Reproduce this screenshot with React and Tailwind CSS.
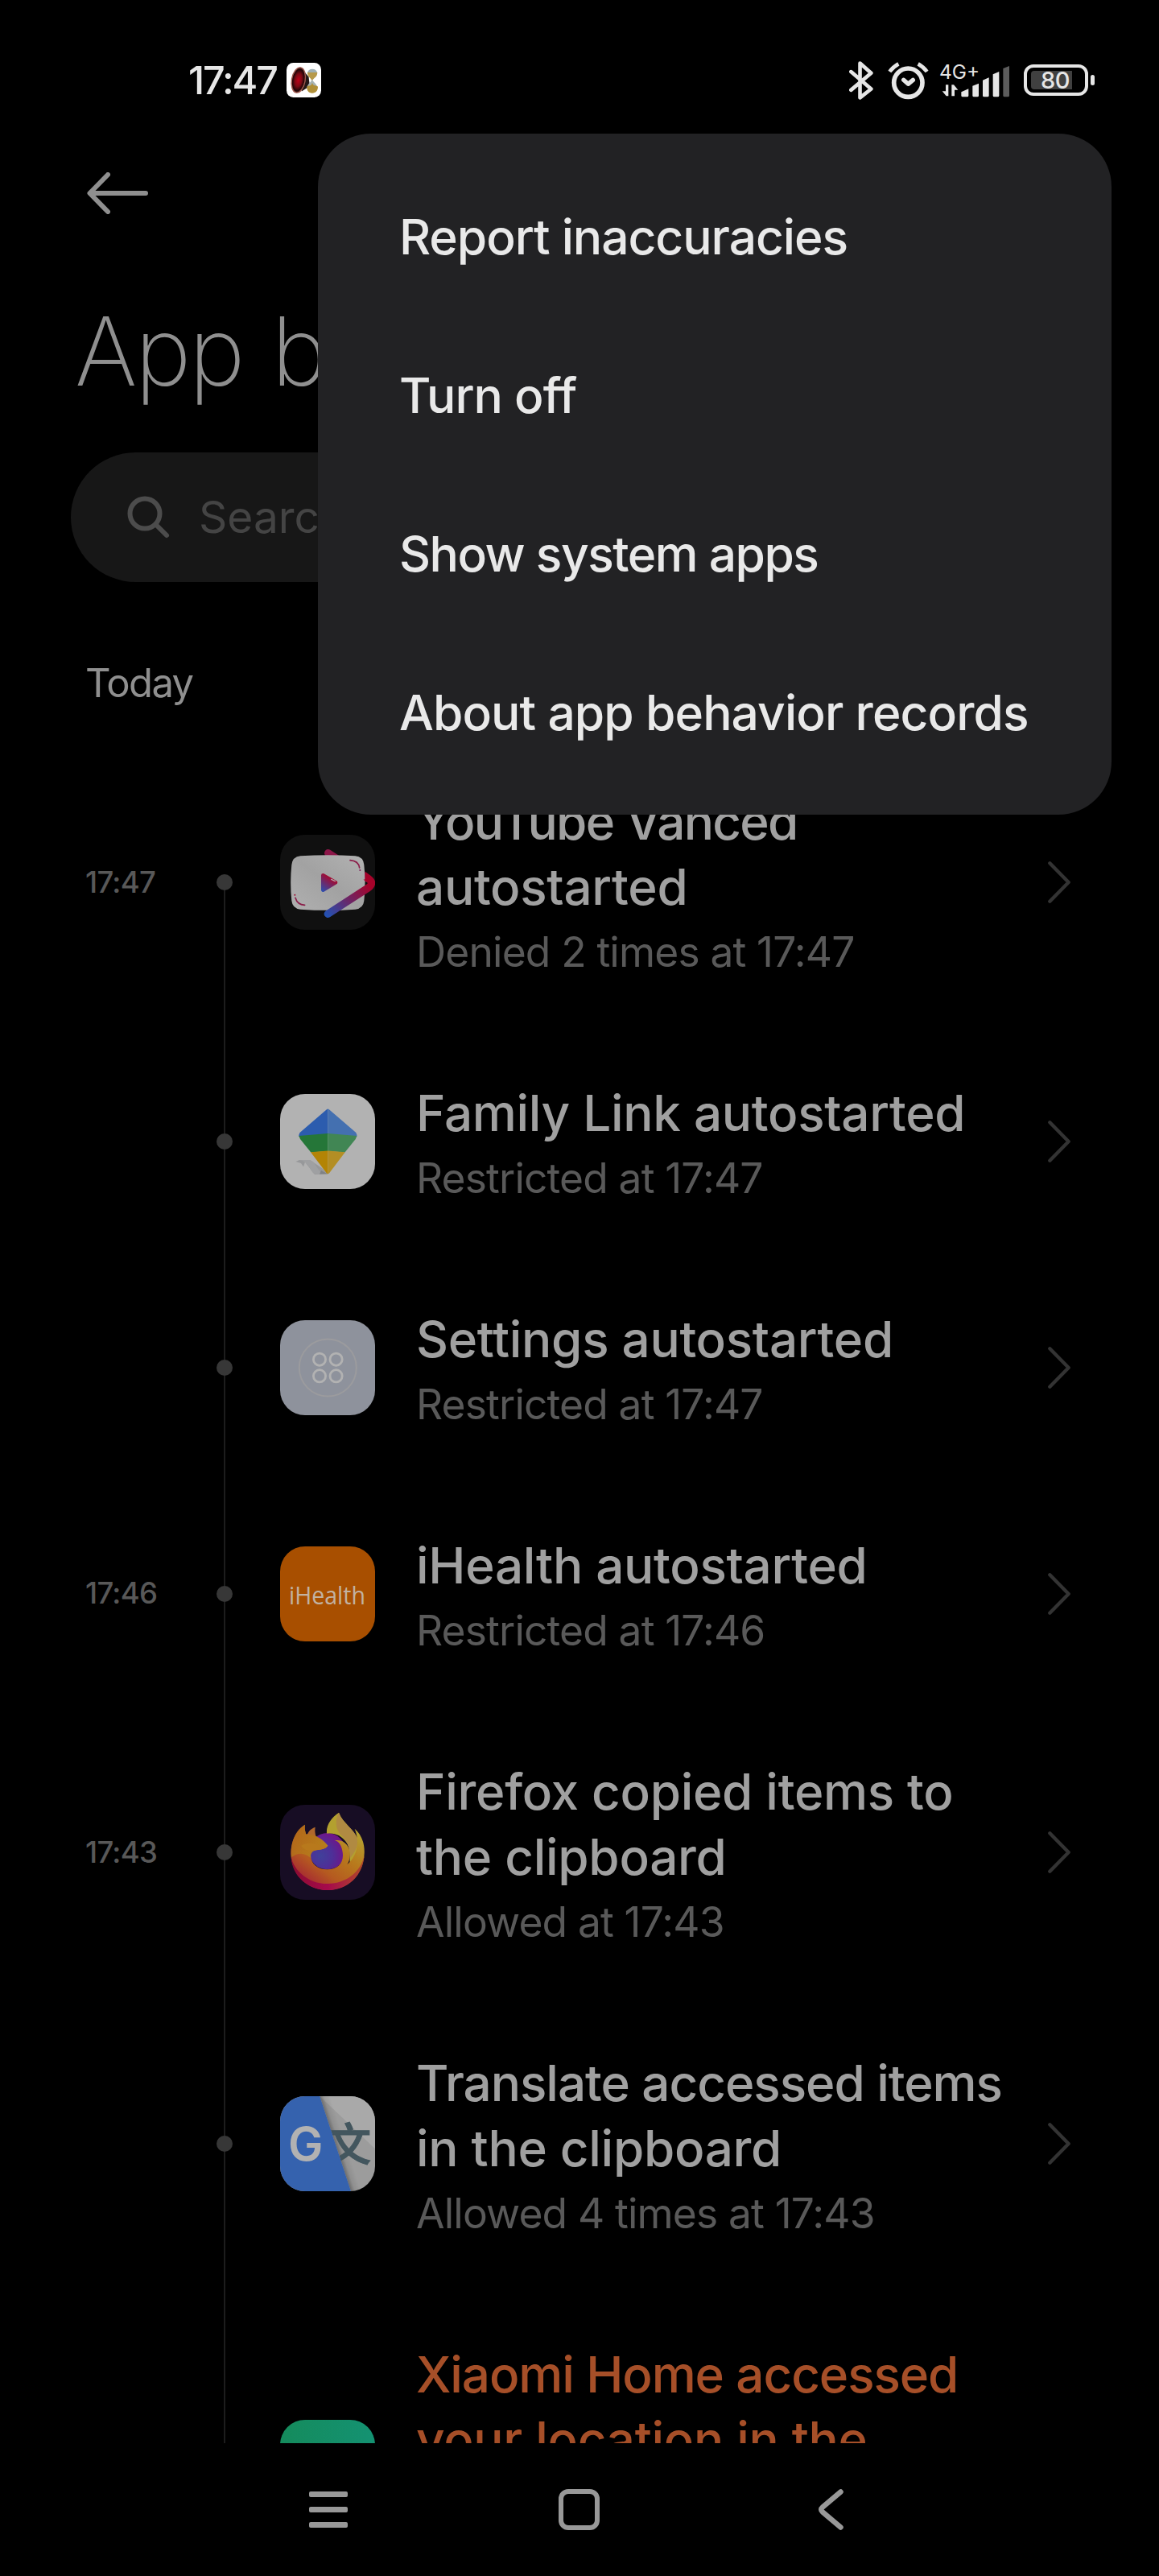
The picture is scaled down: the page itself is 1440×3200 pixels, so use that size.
const MENU_ITEMS = [
  { label: 'Report inaccuracies', tracking: 'tracking-[-1.05px]' },
  { label: 'Turn off', tracking: 'tracking-[-1px]' },
  { label: 'Show system apps', tracking: 'tracking-[-1.5px]' },
  { label: 'About app behavior records', tracking: 'tracking-[-0.92px]' },
];

/* ---------- status bar ---------- */

function NotificationIcon() {
  return (
    <svg className="h-[43px] w-[43px]" viewBox="470 86 128 128">
      <defs>
        <radialGradient id="speaker" cx="0.5" cy="0.5" r="0.5">
          <stop offset="0" stopColor="#c00018" />
          <stop offset="0.5" stopColor="#7c0a14" />
          <stop offset="0.85" stopColor="#200507" />
          <stop offset="1" stopColor="#5a2a24" />
        </radialGradient>
      </defs>
      <rect x="470" y="86" width="128" height="128" rx="25" fill="#fff" />
      <path d="M528 110 L552 138 L556 172 L526 192Z" fill="#221716" />
      <ellipse cx="514" cy="150" rx="25" ry="47" transform="rotate(10 514 150)" fill="url(#speaker)" stroke="#a05a50" strokeWidth="4" />
      <path d="M547 124 A19 19 0 0 1 584 124Z" fill="#9fb0b4" />
      <path d="M547 122 H584 C584 140 570 142 567 150 H562 C560 142 547 138 547 122Z" fill="#b79a4a" />
      <path d="M562 150 H567 C570 160 584 164 584 180 H546 C546 164 560 160 562 150Z" fill="#a8b4b4" />
      <path d="M545 174 C555 168 560 176 565 160 C570 176 578 168 586 174 C586 190 578 198 565 198 C552 198 545 190 545 174Z" fill="#b09038" />
    </svg>
  );
}

function BluetoothIcon() {
  return (
    <svg className="h-[48px] w-[30px]" viewBox="75 75 91 144" fill="none" stroke="#e6e6e6" strokeWidth="14" strokeLinecap="round" strokeLinejoin="round">
      <path d="M82 114 L158 179 L116 212 V82 L158 119 L82 183" />
    </svg>
  );
}

function AlarmIcon() {
  return (
    <svg className="h-[48px] w-[51px]" viewBox="219 75 153 144" fill="none" stroke="#e6e6e6">
      <circle cx="295" cy="155" r="53" strokeWidth="17" />
      <path d="M278 145 L295 160 L313 145" strokeWidth="16" strokeLinecap="round" strokeLinejoin="round" />
      <path d="M226 114 Q239 96 259 85 M332 85 Q352 96 365 114" strokeWidth="14" />
    </svg>
  );
}

function SignalIcon() {
  return (
    <svg className="h-[48px] w-[86px] overflow-visible" viewBox="413 75 258 144" fill="#e6e6e6">
      <text x="410" y="140" fontFamily="Inter, sans-serif" fontSize="73" fontWeight="430" textLength="150" lengthAdjust="spacingAndGlyphs">4G+</text>
      <path d="M434 163 H444 V205 H436 L421 187 H434Z M456 163 H464 L480 182 H467 V205 H456Z" />
      <path d="M492 190 L519 178 V203 Q519 208 514 208 H497 Q492 208 492 203Z" />
      <path d="M534 167 L557 158 V203 Q557 208 552 208 H539 Q534 208 534 203Z" />
      <path d="M572 146 L595 136 V203 Q595 208 590 208 H577 Q572 208 572 203Z" />
      <path d="M610 124 L633 114 V203 Q633 208 628 208 H615 Q610 208 610 203Z" />
      <path d="M648 102 L671 93 V203 Q671 208 666 208 H653 Q648 208 648 203Z" fill="#5c5c5c" />
    </svg>
  );
}

function Battery() {
  return (
    <div className="flex items-center gap-[3px]">
      <div className="flex h-[39px] w-[80px] items-center rounded-[12px] border-4 border-[#e6e6e6] pl-[5px]">
        <div className="flex h-[23px] w-[51px] items-center justify-center rounded-l-[4px] bg-[#404040] pl-[9px] text-[29px] leading-none font-medium tracking-[-0.5px] text-[#e6e6e6]">
          80
        </div>
      </div>
      <div className="h-[13px] w-[5px] rounded-full bg-[#e6e6e6]" />
    </div>
  );
}

function StatusBar() {
  return (
    <div className="flex h-[199px] items-center justify-between pr-[80px] pl-[234px]">
      <div className="flex items-center gap-[12px]">
        <span className="pt-[2px] text-[48.5px] leading-none font-medium tracking-[-2.1px] text-[#e6e6e6]">17:47</span>
        <NotificationIcon />
      </div>
      <div className="flex items-center">
        <BluetoothIcon />
        <div className="ml-[18px]"><AlarmIcon /></div>
        <div className="ml-[14px]"><SignalIcon /></div>
        <div className="ml-[18px]"><Battery /></div>
      </div>
    </div>
  );
}

/* ---------- app icons ---------- */

const ICON = 'block h-[118px] w-[118px] rounded-[31px]';

function VancedIcon() {
  return (
    <svg className={ICON} viewBox="24 24 354 354">
      <defs>
        <linearGradient id="ribbon" gradientUnits="userSpaceOnUse" x1="330" y1="190" x2="200" y2="325">
          <stop offset="0" stopColor="#a5032a" />
          <stop offset="0.5" stopColor="#6a2768" />
          <stop offset="1" stopColor="#2450b2" />
        </linearGradient>
        <linearGradient id="play" gradientUnits="userSpaceOnUse" x1="215" y1="185" x2="180" y2="235">
          <stop offset="0" stopColor="#a30a30" />
          <stop offset="1" stopColor="#2c4eb0" />
        </linearGradient>
        <linearGradient id="plate" x1="0" y1="1" x2="1" y2="0">
          <stop offset="0" stopColor="#b0b0b0" />
          <stop offset="0.5" stopColor="#a2a2a2" />
          <stop offset="1" stopColor="#b2b2b2" />
        </linearGradient>
        <clipPath id="ribbonClip"><path d="M341 100 H400 V400 H150 V240 L341 190Z" /></clipPath>
      </defs>
      <rect x="24" y="24" width="354" height="354" fill="#101010" />
      <path d="M203 92 L350 187" fill="none" stroke="#8c1648" strokeWidth="28" strokeLinecap="round" />
      <path d="M100 103 Q202 96 304 103 Q334 106 337 136 Q344 202 337 270 Q334 299 304 302 Q202 309 100 302 Q70 299 67 270 Q60 202 67 136 Q70 106 100 103Z" fill="url(#plate)" />
      <path d="M330 170 L354 188 Q376 204 352 222 L202 319" fill="none" stroke="url(#ribbon)" strokeWidth="28" strokeLinecap="round" strokeLinejoin="round" clipPath="url(#ribbonClip)" />
      <path d="M184 175 L231 202 L184 230Z" fill="url(#play)" stroke="url(#play)" strokeWidth="14" strokeLinejoin="round" />
      <path d="M215 190 L229 197" stroke="#b5a0a8" strokeWidth="4" strokeLinecap="round" />
      <path d="M285 119 Q316 121 320 147" fill="none" stroke="#8a1c48" strokeWidth="5" strokeLinecap="round" />
      <path d="M81 259 Q88 285 116 286" fill="none" stroke="#8a1c48" strokeWidth="5" strokeLinecap="round" />
      <circle cx="322" cy="156" r="3" fill="#7a2058" />
      <circle cx="79" cy="248" r="3" fill="#a00830" />
    </svg>
  );
}

function FamilyLinkIcon() {
  return (
    <svg className={ICON} viewBox="0 0 118 118">
      <rect width="118" height="118" fill="#b2b2b2" />
      <path d="M19.5 84 L24 82 H37 L52 92 L59.5 99 L43 100 L31 84.500 L29 90.500 L26 86Z" fill="#97989a" />
      <path d="M24 82 H37 Q42 83 45 90 L52 99.500 H43 Q40 98 37 92Q32 83 24 82Z" fill="#9fa0a2" />
      <path d="M51 95 L59.400 99.500 H49Z" fill="#808284" />
      <path d="M57 20 Q58.200 18.500 59.400 18.500 V50 L23.500 53 Q23 50.500 24.500 48Z" fill="#2c5cae" />
      <path d="M59.400 18.500 Q60.600 18.500 61.800 20 L94.300 48 Q95.800 50.500 95.300 53 L59.400 50Z" fill="#4470b0" />
      <path d="M59.400 49 L23.400 52 L25 56 L38.300 72.500 L59.400 71Z" fill="#257638" />
      <path d="M59.400 49 L95.400 52 L93.800 56 L80.500 72.500 L59.400 71Z" fill="#418654" />
      <path d="M59.400 70.500 L38 72.300 L57.500 98 Q58.500 99.300 59.400 99.300Z" fill="#b38405" />
      <path d="M59.400 70.500 L80.800 72.300 L61.300 98 Q60.300 99.300 59.400 99.300Z" fill="#b38e24" />
    </svg>
  );
}

function SettingsIcon() {
  return (
    <svg className={ICON} viewBox="0 0 118 118" fill="none">
      <rect width="118" height="118" fill="#8e929c" />
      <circle cx="59.300" cy="59" r="35.500" stroke="#9b9b9e" strokeWidth="2" />
      <g stroke="#b2b2b2" strokeWidth="2.800">
        <circle cx="49" cy="48.700" r="7.600" />
        <circle cx="69.600" cy="48.700" r="7.600" />
        <circle cx="49" cy="69.300" r="7.600" />
        <circle cx="69.600" cy="69.300" r="7.600" />
      </g>
    </svg>
  );
}

function IHealthIcon() {
  return (
    <svg className={ICON} viewBox="0 0 118 118">
      <rect width="118" height="118" fill="#a84f00" />
      <text x="11" y="71.500" fontFamily="'Open Sans', sans-serif" fontSize="31" fill="#c2b2a2" textLength="95" lengthAdjust="spacingAndGlyphs">iHealth</text>
    </svg>
  );
}

function FirefoxIcon() {
  return (
    <svg className={ICON} viewBox="24 24 354 354">
      <defs>
        <linearGradient id="fox" gradientUnits="userSpaceOnUse" x1="300" y1="120" x2="150" y2="320">
          <stop offset="0" stopColor="#b5a030" />
          <stop offset="0.4" stopColor="#b8791c" />
          <stop offset="0.75" stopColor="#b55a20" />
          <stop offset="1" stopColor="#a83030" />
        </linearGradient>
        <radialGradient id="globe" gradientUnits="userSpaceOnUse" cx="175" cy="215" r="90">
          <stop offset="0" stopColor="#40409a" />
          <stop offset="0.5" stopColor="#4e2f98" />
          <stop offset="1" stopColor="#701488" />
        </radialGradient>
        <linearGradient id="rim" x1="0" y1="0" x2="1" y2="0">
          <stop offset="0" stopColor="#8a0c30" />
          <stop offset="0.5" stopColor="#a60a4c" />
          <stop offset="1" stopColor="#b04a28" />
        </linearGradient>
        <linearGradient id="head" x1="0" y1="0" x2="1" y2="1">
          <stop offset="0" stopColor="#b06018" />
          <stop offset="1" stopColor="#b88a1c" />
        </linearGradient>
      </defs>
      <rect x="24" y="24" width="354" height="354" fill="#170d24" />
      <circle cx="200" cy="197" r="68" fill="url(#globe)" />
      <path d="M243 53 C215 72 195 98 198 131 C240 126 268 150 282 185 L284 242 C312 220 320 185 313 150 C300 115 258 92 243 53Z" fill="#b3a02f" />
      <path d="M243 53 C226 85 232 116 252 137 C272 157 284 180 285 222 C306 198 318 170 312 148 C298 112 256 92 243 53Z" fill="#b08a42" />
      <path d="M117 98 C115 112 117 122 121 134 C145 132 180 150 202 176 C195 187 180 189 165 192 C145 192 138 203 138 215 C140 245 165 265 200 265 C243 265 265 235 256 195 C252 175 243 160 228 157 C262 150 287 180 284 210 C283 235 278 240 274 246 C305 222 325 170 302 113 C325 132 340 165 338 205 C335 285 275 342 201 342 C125 342 66 285 64 205 C64 160 85 116 117 98Z" fill="url(#fox)" />
      <path d="M155 107 C139 113 130 122 125 136 L158 143 C154 130 153 118 155 107Z" fill="#b0682c" />
      <path d="M117 98 C115 112 117 122 121 134 C150 130 184 152 202 176 C195 188 178 190 160 193 C142 196 136 208 139 222 C120 208 96 196 66 220 C60 160 85 116 117 98Z" fill="url(#head)" opacity="0.8" />
      <path d="M102 176 C120 166 140 164 160 172 C170 176 190 178 202 176 C195 188 178 190 160 192 C140 198 115 196 102 176Z" fill="#b8791c" />
      <path d="M65 218 C75 268 130 320 203 318 C270 316 325 275 338 212 C332 290 275 342 201 342 C130 342 68 290 65 218Z" fill="url(#rim)" />
    </svg>
  );
}

function TranslateIcon() {
  return (
    <svg className={ICON} viewBox="84 194 354 354">
      <defs>
        <linearGradient id="fold" gradientUnits="userSpaceOnUse" x1="290" y1="371" x2="325" y2="359.500">
          <stop offset="0" stopColor="#000" stopOpacity="0.3" />
          <stop offset="0.4" stopColor="#000" stopOpacity="0.08" />
          <stop offset="1" stopColor="#000" stopOpacity="0" />
        </linearGradient>
        <clipPath id="page"><path d="M232 194 H438 V548 H348Z" /></clipPath>
      </defs>
      <rect x="84" y="194" width="354" height="354" fill="#9c9c9c" />
      <path d="M232 194 H438 V390Z" fill="#a9a9a9" />
      <g clipPath="url(#page)">
        <rect x="232" y="194" width="206" height="354" fill="url(#fold)" />
        <text x="256" y="433" fontFamily="'Noto Sans CJK SC', sans-serif" fontWeight="500" fontSize="168" fill="#43565e" stroke="#43565e" strokeWidth="3">文</text>
      </g>
      <path d="M84 194 H232 L348 548 H84Z" fill="#3562ae" />
      <text x="114" y="435" fontFamily="Inter, sans-serif" fontWeight="620" fontSize="174" fill="#b2b2b2">G</text>
    </svg>
  );
}

function XiaomiHomeIcon() {
  return <div className="h-[118px] w-[118px] rounded-[31px] bg-linear-to-r from-[#158b5c] to-[#149272]" />;
}

/* ---------- records ---------- */

const RECORDS = [
  { time: '17:47', icon: VancedIcon, lines: [{ text: 'YouTube Vanced', style: 'tracking-[-1.7px]' }, { text: 'autostarted' }], detail: 'Denied 2 times at 17:47' },
  { icon: FamilyLinkIcon, lines: [{ text: 'Family Link autostarted' }], detail: 'Restricted at 17:47' },
  { icon: SettingsIcon, lines: [{ text: 'Settings autostarted' }], detail: 'Restricted at 17:47' },
  { time: '17:46', icon: IHealthIcon, lines: [{ text: 'iHealth autostarted' }], detail: 'Restricted at 17:46' },
  { time: '17:43', icon: FirefoxIcon, lines: [{ text: 'Firefox copied items to' }, { text: 'the clipboard' }], detail: 'Allowed at 17:43' },
  { icon: TranslateIcon, lines: [{ text: 'Translate accessed items', style: 'tracking-[-1.05px]' }, { text: 'in the clipboard' }], detail: 'Allowed 4 times at 17:43' },
];

function Chevron() {
  return (
    <svg className="h-[52px] w-[28px]" viewBox="65 123 84 156" fill="none" stroke="#333" strokeWidth="13" strokeLinecap="round" strokeLinejoin="round">
      <path d="M72 130 L142 201 L72 272" />
    </svg>
  );
}

function Timeline({ first, last }) {
  return (
    <div className="flex w-5 flex-col items-center self-stretch">
      <div className={first ? 'w-[2px] flex-1' : 'w-[2px] flex-1 bg-[#1d1d1d]'} />
      {!last && <div className="h-5 w-5 rounded-full bg-[#373737]" />}
      <div className="w-[2px] flex-1 bg-[#1d1d1d]" />
    </div>
  );
}

function RecordRow({ record, first }) {
  const Icon = record.icon;
  return (
    <div className={record.lines.length === 1 ? 'flex h-[281px] shrink-0 items-center pr-[110px] pl-[106px]' : 'flex h-[362px] shrink-0 items-center pr-[110px] pl-[106px]'}>
      <div className="w-[163px] text-[36.5px] font-[450] tracking-[-0.7px] text-[#585858]">{record.time}</div>
      <Timeline first={first} />
      <div className="ml-[59px]"><Icon /></div>
      <div className="ml-[51px] flex-1 pt-[9px] whitespace-nowrap">
        <div className="text-[62px] leading-[81px] font-[460] tracking-[-0.3px] text-[#a0a0a0]">
          {record.lines.map((line) => <div key={line.text} className={line.style}>{line.text}</div>)}
        </div>
        <div className="text-[51.5px] leading-[80px] font-normal tracking-[-0.85px] text-[#595959]">{record.detail}</div>
      </div>
      <Chevron />
    </div>
  );
}

function LocationRow() {
  return (
    <div className="flex h-[191px] shrink-0 overflow-hidden pl-[269px]">
      <Timeline last />
      <div className="mt-[162px] ml-[59px]"><XiaomiHomeIcon /></div>
      <div className="mt-[65px] ml-[51px] text-[62px] leading-[81px] font-[460] whitespace-nowrap text-[#a64f28]">
        <div className="tracking-[-1.1px]">Xiaomi Home accessed</div>
        <div className="tracking-[-0.3px]">your location in the</div>
      </div>
    </div>
  );
}

/* ---------- chrome ---------- */

function OverflowMenu() {
  return (
    <div className="absolute top-[166px] left-[395px] flex h-[846px] w-[986px] flex-col justify-center rounded-[66px] bg-[#222224] pt-[2px] pl-[101px] text-[60.5px] leading-none font-medium text-[#e9e9e9]">
      {MENU_ITEMS.map((item) => (
        <div key={item.label} className="flex h-[197px] items-center">
          <span className={item.tracking}>{item.label}</span>
        </div>
      ))}
    </div>
  );
}

function NavigationBar() {
  return (
    <div className="flex h-[165px] items-center pl-[384px]">
      <div className="flex w-12 flex-col gap-3">
        <div className="h-[7px] rounded-[2px] bg-[#989898]" />
        <div className="h-[7px] rounded-[2px] bg-[#989898]" />
        <div className="h-[7px] rounded-[2px] bg-[#989898]" />
      </div>
      <div className="ml-[262px] h-[51px] w-[51px] rounded-[12px] border-[6.5px] border-[#989898]" />
      <svg className="ml-[271px] h-[51px] w-[32px]" viewBox="0 0 32 51" fill="none" stroke="#989898" strokeWidth="6.500" strokeLinecap="round">
        <path d="M28.500 3.500 L6 22.500 Q2.500 25.500 6 28.500 L28.500 47.500" />
      </svg>
    </div>
  );
}

export default function App() {
  return (
    <div className="relative h-[3200px] w-[1440px] overflow-hidden bg-black font-['Inter',sans-serif]">
      <StatusBar />

      <div className="flex h-[81px] items-center pl-[108px]">
        <svg className="h-[52px] w-[76px]" viewBox="0 0 76 52" fill="none" stroke="#8f8f8f" strokeWidth="6" strokeLinecap="round" strokeLinejoin="round">
          <path d="M73 26 H4 M26 3 L3.500 26 L26 49" />
        </svg>
      </div>

      <h1 className="mt-[86px] ml-[93px] text-[118px] leading-[140px] font-[230] tracking-[-2.7px] whitespace-nowrap text-[#8f8f8f] [word-spacing:5px]">
        App behavior
      </h1>

      <div className="mt-[56px] ml-[88px] flex h-[161px] w-[1264px] items-center rounded-full bg-[#171717] pl-[70px]">
        <svg className="h-[54px] w-[54px]" viewBox="0 0 54 54" fill="none" stroke="#4c4c4c" strokeWidth="6">
          <circle cx="22" cy="22" r="18.500" />
          <path d="M35.500 35.500 L49 49" strokeLinecap="round" />
        </svg>
        <span className="ml-[35px] text-[55px] leading-none font-[380] text-[#444]">Search</span>
      </div>

      <div className="h-[192px] pt-[96px] pl-[106px] text-[49px] leading-[60px] font-[400] tracking-[-1.6px] text-[#8f8f8f]">Today</div>

      <div className="flex h-[2120px] flex-col">
        {RECORDS.map((record, i) => <RecordRow key={record.lines[0].text} record={record} first={i === 0} />)}
        <LocationRow />
      </div>

      <NavigationBar />
      <OverflowMenu />
    </div>
  );
}
